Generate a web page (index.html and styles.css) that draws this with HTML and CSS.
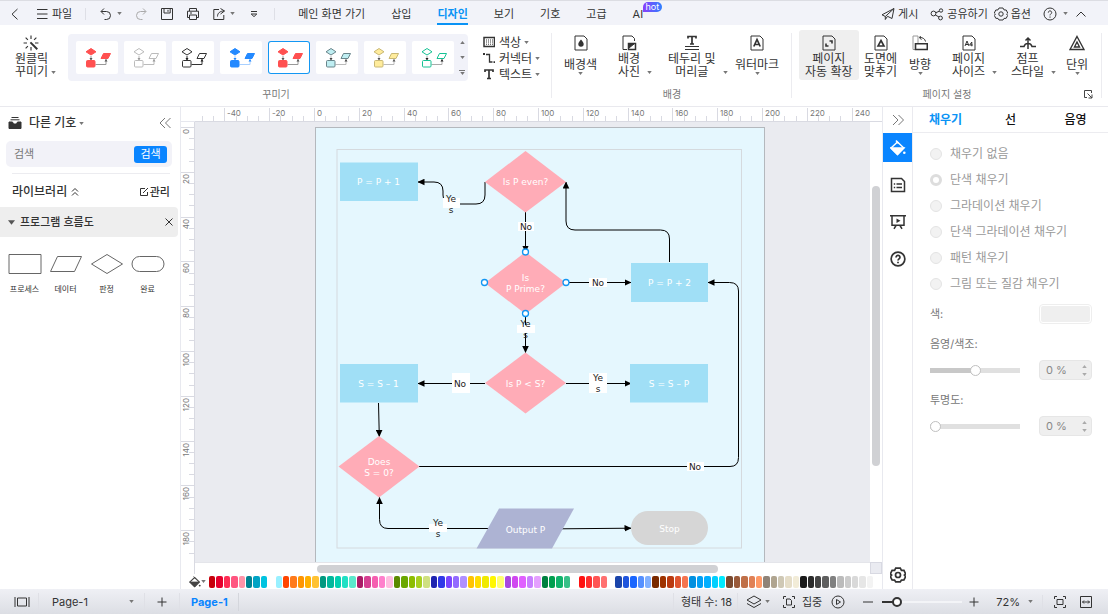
FILE: index.html
```html
<!DOCTYPE html>
<html lang="ko">
<head>
<meta charset="utf-8">
<title>Page-1</title>
<link rel="stylesheet" href="styles.css">
</head>
<body>
<svg class="defs" aria-hidden="true">
  <symbol id="i-caret" viewBox="0 0 6 4"><path d="M0 0h6L3 4z" fill="currentColor"/></symbol>
  <symbol id="i-back" viewBox="0 0 14 14"><path d="M9.500 2L4 7.200l5.500 5.200"/></symbol>
  <symbol id="i-menu" viewBox="0 0 14 14"><path d="M2 2.500h10.500M2 7h10.500M2 11.500h10.500"/></symbol>
  <symbol id="i-undo" viewBox="0 0 14 14"><path d="M5 1.500L2 4.500l3 3M2.200 4.500h5.300a4 4 0 0 1 0 8H5.500"/></symbol>
  <symbol id="i-redo" viewBox="0 0 14 14"><path d="M9 1.500l3 3-3 3M11.800 4.500H6.500a4 4 0 0 0 0 8h2"/></symbol>
  <symbol id="i-save" viewBox="0 0 14 14"><path d="M1.500 1.500h11v11h-11zM4 1.500v4.500h6.200V1.500M8 2.800v2"/></symbol>
  <symbol id="i-print" viewBox="0 0 14 14"><path d="M3.500 4V1.500h7V4M3.500 10.500h-2V4.200h11v6.300h-2M3.500 8h7v4.500h-7zM4 6h2"/></symbol>
  <symbol id="i-export" viewBox="0 0 14 14"><path d="M7 2.500H1.800v10h10V8M8.500 1.500l4 2.500-4 3M12.300 4C8 4 5.500 6 5.500 9.500"/></symbol>
  <symbol id="i-more" viewBox="0 0 14 14"><path d="M4 4.500h6M4.200 7L7 9.600 9.800 7z"/></symbol>
  <symbol id="i-plane" viewBox="0 0 14 14"><path d="M13 1.500L1 7.800l3.300 1.700L13 1.500l-2 10-4.500-2.200M4.300 9.500v3l2.200-3.200"/></symbol>
  <symbol id="i-share" viewBox="0 0 14 14"><circle cx="3.500" cy="6.500" r="2.400"/><circle cx="11" cy="3.500" r="1.700"/><circle cx="10.500" cy="11" r="1.900"/><path d="M5.800 5.700L9.400 4.200M5.400 8L9 10"/></symbol>
  <symbol id="i-gear" viewBox="0 0 14 14"><path d="M5 1h4l1 1.900 2.200.1 1.500 3L12.600 7l1.100 1.400-1.500 2.900-2.200.1L9 13H5l-1-1.600-2.200-.1L.3 8.400 1.400 7 .3 6l1.500-3L4 2.900z"/><circle cx="7" cy="7" r="2.200"/></symbol>
  <symbol id="i-help" viewBox="0 0 14 14"><circle cx="7" cy="7" r="6"/><path d="M5.300 5.600c0-2.400 3.500-2.200 3.400 0C8.700 6.800 7 7 7 8.400M7 9.500v1.200"/></symbol>
  <symbol id="i-up" viewBox="0 0 14 14"><path d="M2.500 9.500L7 5l4.500 4.500"/></symbol>
  <symbol id="i-wand" viewBox="0 0 14 14"><path d="M7 .5v3M2.300 2.300l2 2M11.700 2.300l-2 2M.5 7h3M10.500 7h3M2.300 11.700l2-2M7 10.500v3"/><path d="M6.500 6.500l6 6" stroke-width="1.700"/></symbol>
  <symbol id="i-grid" viewBox="0 0 12 12"><path d="M1 1.500h10.500v9H1z" stroke-width="1.500"/><path d="M3 4h7M3 6h7M3 8.200h7" stroke-dasharray="1 1"/></symbol>
  <symbol id="i-conn" viewBox="0 0 12 12"><path d="M3 2.500h3.500v7.500h3" stroke-width="1.300"/><path d="M0 1h2v2H0zM10.500 9.300h1.500v1.700h-1.500z" fill="currentColor" stroke="none"/></symbol>
  <symbol id="i-text" viewBox="0 0 12 12"><path d="M2 4V2h8v2M6 2v8.500M4 10.500h4" stroke-width="1.700"/></symbol>
  <symbol id="i-bg" viewBox="0 0 16 16"><path d="M2 1h9l3 3v11H2z"/><path d="M8 4.500c1.500 2 2.700 3 2.700 4.500a2.700 2.700 0 0 1-5.400 0C5.300 7.500 6.500 6.500 8 4.500z" fill="currentColor" stroke="none"/></symbol>
  <symbol id="i-photo" viewBox="0 0 16 16"><path d="M6 14.500H2V1h9l2.500 2.500V6"/><path d="M7.500 8.500h7v6h-7z" stroke-width="1.500"/><path d="M8 13V9l5 0z" fill="currentColor"/></symbol>
  <symbol id="i-header" viewBox="0 0 16 16"><path d="M4 3.500V1.500h8v2M8 1.500V9M6 9h4" stroke-width="1.700"/><path d="M1 11.500h14M1 14.500h14"/></symbol>
  <symbol id="i-mark" viewBox="0 0 16 16"><path d="M2 1h9l3 3v11H2z"/><path d="M4.800 11.500L8 4.500l3.200 7M6 9.500h4" stroke-width="1.700"/></symbol>
  <symbol id="i-expand" viewBox="0 0 16 16"><path d="M2 1h9l3 3v11H2z"/><path d="M8.500 6h2.500v2.500M7.500 11H5V8.500" stroke-width="1.600"/></symbol>
  <symbol id="i-fit" viewBox="0 0 16 16"><path d="M2 1h9l3 3v11H2z"/><path d="M8 5.500l3 5.500H5z" stroke-width="1.600"/></symbol>
  <symbol id="i-orient" viewBox="0 0 16 16"><path d="M4 14.500H1V1h5v7" stroke="#999"/><path d="M3.500 8.800h11.800v5.700H3.500z" stroke-width="1.600"/><path d="M8 2.500c3 0 5 1.500 5.500 4M8.500 1L7.500 3l2 1.500"/></symbol>
  <symbol id="i-size" viewBox="0 0 16 16"><path d="M2 1h9l3 3v11H2z"/><path d="M4 11l2-5 2 5M4.800 9.500h2.500M10.800 11.300V7L8.700 10h3"/></symbol>
  <symbol id="i-jump" viewBox="0 0 16 16"><path d="M0 11.500h4a4.200 4.200 0 0 1 8 0h4M8 14V3M5.500 5.500L8 3l2.500 2.500" stroke-width="1.500"/></symbol>
  <symbol id="i-unit" viewBox="0 0 16 16"><path d="M8 1.500l7 13H1zM8 7l2.500 5h-5z" stroke-width="1.400"/></symbol>
  <symbol id="i-launch" viewBox="0 0 10 10"><path d="M4 8.500H1.500v-7h7V4M4.500 4.500L9 9M9 5.500V9H5.500"/></symbol>
  <symbol id="i-style" viewBox="0 0 42 33"><path class="link" d="M15 15v4M19.500 23.500H30V18"/><path class="tip" d="M13.500 17h3L15 19.500zM28.500 20.500h3L30 18z"/><g class="fig"><path d="M15 7.500l5 3.300L15 14 10 10.800z"/><path d="M27.500 12.500H34.500l-2.500 5h-7z"/><rect x="10.500" y="19.500" width="8.500" height="6.500" rx="1"/></g></symbol>
  <symbol id="i-box" viewBox="0 0 14 14"><path d="M3.500 1.500h7M2.500 3.800h9" /><path d="M1 6h3.500l1 2h3l1-2H13v6.500H1z" fill="currentColor" stroke="currentColor"/></symbol>
  <symbol id="i-dleft" viewBox="0 0 14 14"><path d="M7 2L2 7l5 5M12.500 2l-5 5 5 5"/></symbol>
  <symbol id="i-dright" viewBox="0 0 14 14"><path d="M2 2l5 5-5 5M7.500 2l5 5-5 5"/></symbol>
  <symbol id="i-dup" viewBox="0 0 8 10"><path d="M1 4.500l3-3 3 3M1 8.500l3-3 3 3"/></symbol>
  <symbol id="i-edit" viewBox="0 0 10 10"><path d="M6 1.500H1.500v7h7V5M4 6l5-5"/></symbol>
  <symbol id="i-x" viewBox="0 0 10 10"><path d="M1.500 1.500l7 7M8.500 1.500l-7 7"/></symbol>
  <symbol id="i-fill" viewBox="0 0 16 16"><path d="M7.500 2l6.300 6-6.300 6.500L1 8z" fill="none" stroke-width="1.400"/><path d="M1 8h12.800l-6.300 6.500z" fill="currentColor"/><path d="M6 .5l2.500 3" /><circle cx="14.300" cy="12.800" r="1.300" fill="currentColor" stroke="none"/></symbol>
  <symbol id="i-doc" viewBox="0 0 16 16"><path d="M1.500 1.500h10l3 3v10h-13z"/><path d="M6.500 7H12M6.500 10.500H12M3.800 7h1.400M3.800 10.500h1.400"/></symbol>
  <symbol id="i-present" viewBox="0 0 16 16"><path d="M0 1.800h16M2 2v9.200h12V2M6 11.500L4 14.800M10 11.500l2 3.300"/><path d="M6.500 4.500l4 2.200-4 2.200z" fill="currentColor" stroke="none"/></symbol>
  <symbol id="i-panel" viewBox="0 0 16 12"><path d="M1 1v10M15 1v10M3.500 2h9v8h-9z"/></symbol>
  <symbol id="i-plus" viewBox="0 0 12 12"><path d="M6 1.500v9M1.500 6h9"/></symbol>
  <symbol id="i-minus" viewBox="0 0 12 12"><path d="M1 6h10"/></symbol>
  <symbol id="i-layers" viewBox="0 0 16 14"><path d="M8 1l7 4-7 4-7-4zM1 8.500l7 4 7-4"/></symbol>
  <symbol id="i-focus" viewBox="0 0 14 14"><path d="M1.500 4V1.500H4M10 1.500h2.500V4M12.500 10v2.500H10M4 12.500H1.500V10M4.500 4h3.500l1.500 1.500V10h-5z"/></symbol>
  <symbol id="i-play" viewBox="0 0 14 14"><circle cx="7" cy="7" r="6"/><path d="M5.500 4.500L9.500 7l-4 2.500z"/></symbol>
  <symbol id="i-fitpage" viewBox="0 0 14 14"><path d="M1.500 4V1.500H4M10 1.500h2.500V4M12.500 10v2.500H10M4 12.500H1.500V10M4 4.500h6v5H4z"/></symbol>
  <symbol id="i-fitwidth" viewBox="0 0 14 14"><path d="M1.500 1.500h11v11h-11zM3.500 7h7M5 5.500L3.500 7 5 8.500M9 5.500L10.500 7 9 8.500"/></symbol>
</svg>

<header class="topbar">
  <button class="tb-btn back" aria-label="뒤로"><svg class="ico"><use href="#i-back"/></svg></button>
  <button class="tb-btn file"><svg class="ico"><use href="#i-menu"/></svg>파일</button>
  <span class="vline"></span>
  <div class="quick">
    <button class="tb-btn" aria-label="실행 취소"><svg class="ico"><use href="#i-undo"/></svg><svg class="caret"><use href="#i-caret"/></svg></button>
    <button class="tb-btn faded" aria-label="다시 실행"><svg class="ico"><use href="#i-redo"/></svg></button>
    <button class="tb-btn" aria-label="저장"><svg class="ico"><use href="#i-save"/></svg></button>
    <button class="tb-btn" aria-label="인쇄"><svg class="ico"><use href="#i-print"/></svg></button>
    <button class="tb-btn" aria-label="내보내기"><svg class="ico"><use href="#i-export"/></svg><svg class="caret"><use href="#i-caret"/></svg></button>
    <button class="tb-btn" aria-label="더 보기"><svg class="ico"><use href="#i-more"/></svg></button>
  </div>
  <span class="vline"></span>
  <nav class="menu">
    <a href="#home">메인 화면 가기</a>
    <a href="#insert">삽입</a>
    <a href="#design" class="active">디자인</a>
    <a href="#view">보기</a>
    <a href="#symbol">기호</a>
    <a href="#advanced">고급</a>
    <a href="#ai" class="ai">AI<span class="hot">hot</span></a>
  </nav>
  <div class="account">
    <button class="tb-btn"><svg class="ico"><use href="#i-plane"/></svg>게시</button>
    <button class="tb-btn"><svg class="ico"><use href="#i-share"/></svg>공유하기</button>
    <button class="tb-btn near"><svg class="ico"><use href="#i-gear"/></svg>옵션</button>
    <button class="tb-btn" aria-label="도움말"><svg class="ico"><use href="#i-help"/></svg><svg class="caret"><use href="#i-caret"/></svg></button>
    <button class="tb-btn near" aria-label="리본 접기"><svg class="ico"><use href="#i-up"/></svg></button>
  </div>
</header>

<section class="ribbon">
  <div class="group beautify">
    <div class="group-body">
      <button class="tool one-click"><svg class="ico16"><use href="#i-wand"/></svg><span class="lbl">원클릭<br>꾸미기<svg class="caret"><use href="#i-caret"/></svg></span></button>
      <div class="gallery">
        <div class="styles" id="styles"></div>
        <div class="gallery-nav">
          <button aria-label="위로"><svg class="caret flip"><use href="#i-caret"/></svg></button>
          <button aria-label="아래로"><svg class="caret"><use href="#i-caret"/></svg></button>
          <button class="all" aria-label="모두 보기"><svg class="caret"><use href="#i-caret"/></svg></button>
        </div>
      </div>
      <div class="stack">
        <button><svg class="ico12"><use href="#i-grid"/></svg>색상<svg class="caret"><use href="#i-caret"/></svg></button>
        <button><svg class="ico12"><use href="#i-conn"/></svg>커넥터<svg class="caret"><use href="#i-caret"/></svg></button>
        <button><svg class="ico12"><use href="#i-text"/></svg>텍스트<svg class="caret"><use href="#i-caret"/></svg></button>
      </div>
    </div>
    <div class="group-name">꾸미기</div>
  </div>
  <div class="group background">
    <div class="group-body">
      <button class="tool single"><svg class="ico16"><use href="#i-bg"/></svg><span class="lbl">배경색</span><svg class="caret"><use href="#i-caret"/></svg></button>
      <button class="tool side"><svg class="ico16"><use href="#i-photo"/></svg><span class="lbl">배경<br>사진</span><svg class="caret"><use href="#i-caret"/></svg></button>
      <button class="tool side"><svg class="ico16"><use href="#i-header"/></svg><span class="lbl">테두리 및<br>머리글</span><svg class="caret"><use href="#i-caret"/></svg></button>
      <button class="tool single"><svg class="ico16"><use href="#i-mark"/></svg><span class="lbl">워터마크</span><svg class="caret"><use href="#i-caret"/></svg></button>
    </div>
    <div class="group-name">배경</div>
  </div>
  <div class="group page-setup">
    <div class="group-body">
      <button class="tool on"><svg class="ico16"><use href="#i-expand"/></svg><span class="lbl">페이지<br>자동 확장</span></button>
      <button class="tool"><svg class="ico16"><use href="#i-fit"/></svg><span class="lbl">도면에<br>맞추기</span></button>
      <button class="tool single"><svg class="ico16"><use href="#i-orient"/></svg><span class="lbl">방향</span><svg class="caret"><use href="#i-caret"/></svg></button>
      <button class="tool side"><svg class="ico16"><use href="#i-size"/></svg><span class="lbl">페이지<br>사이즈</span><svg class="caret"><use href="#i-caret"/></svg></button>
      <button class="tool side"><svg class="ico16"><use href="#i-jump"/></svg><span class="lbl">점프<br>스타일</span><svg class="caret"><use href="#i-caret"/></svg></button>
      <button class="tool single"><svg class="ico16"><use href="#i-unit"/></svg><span class="lbl">단위</span><svg class="caret"><use href="#i-caret"/></svg></button>
    </div>
    <div class="group-name">페이지 설정<button class="launch" aria-label="페이지 설정 열기"><svg class="ico10"><use href="#i-launch"/></svg></button></div>
  </div>
</section>

<main class="main">
  <aside class="library">
    <div class="lib-head">
      <svg class="ico"><use href="#i-box"/></svg>
      <button class="lib-title">다른 기호<svg class="caret"><use href="#i-caret"/></svg></button>
      <button class="plain push" aria-label="접기"><svg class="ico thin"><use href="#i-dleft"/></svg></button>
    </div>
    <form class="search">
      <input type="text" placeholder="검색" aria-label="검색">
      <button type="button">검색</button>
    </form>
    <div class="lib-row">
      <span>라이브러리</span><svg class="ico10"><use href="#i-dup"/></svg>
      <button class="plain push manage"><svg class="ico10"><use href="#i-edit"/></svg>관리</button>
    </div>
    <div class="lib-section">
      <svg class="tri"><use href="#i-caret"/></svg><span>프로그램 흐름도</span>
      <button class="plain push" aria-label="닫기"><svg class="ico10"><use href="#i-x"/></svg></button>
    </div>
    <div class="shapes">
      <figure><svg viewBox="0 0 34 20"><path d="M1 .5h32v19H1z"/></svg><figcaption>프로세스</figcaption></figure>
      <figure><svg viewBox="0 0 34 20"><path d="M8.500 2.500h24l-7 15h-24z"/></svg><figcaption>데이터</figcaption></figure>
      <figure><svg viewBox="0 0 34 20"><path d="M17 .5L32.500 10 17 19.500 1.500 10z"/></svg><figcaption>판정</figcaption></figure>
      <figure><svg viewBox="0 0 34 20"><rect x="1" y="2.500" width="32" height="15" rx="7.500"/></svg><figcaption>완료</figcaption></figure>
    </div>
  </aside>

  <section class="editor">
    <div class="corner"></div>
    <svg class="ruler-x" id="ruler-x"></svg>
    <svg class="ruler-y" id="ruler-y"></svg>
    <div class="workspace">
      <svg class="sheet" viewBox="315 127 450 634" width="450" height="634">
        <defs><marker id="arrow" viewBox="0 0 7 7" refX="6.500" refY="3.500" markerWidth="7" markerHeight="7" orient="auto" markerUnits="userSpaceOnUse"><path d="M0 .2L7 3.500 0 6.800z"/></marker></defs>
        <rect class="paper" x="315.500" y="127.500" width="449" height="633"/>
        <rect class="margin" x="337" y="149.500" width="404.500" height="398.500"/>
        <g class="wires">
          <path d="M485 182v13q0 9-9 9h-24q-9 0-9-9v-4q0-9-9-9H418"/>
          <path d="M525.500 212v40"/>
          <path d="M566 282.500h65"/>
          <path d="M669.500 262v-23q0-9-9-9H575q-9 0-9-9v-39"/>
          <path d="M525.500 314v38.500"/>
          <path d="M485 383.500h-67"/>
          <path d="M566 383.500h65"/>
          <path d="M378.500 403l.8 33.500"/>
          <path d="M419 466.500h311q8.500 0 8.500-9V291q0-8.500-9-8.500H708"/>
          <path d="M488 528.500H388q-8.500 0-8.500-9V497.500"/>
          <path d="M562 528.800l69-.6"/>
        </g>
        <g class="process"><rect x="340" y="162.500" width="78" height="38.500"/><rect x="631" y="263" width="77" height="39"/><rect x="340" y="364" width="78" height="38.500"/><rect x="630" y="364" width="78" height="38.500"/></g>
        <g class="decision"><path d="M525.500 151l40.500 31-40.500 30.500L485 182z"/><path d="M525.500 252l40.500 31-40.500 31L485 283z"/><path d="M525.500 352.500L566 383l-40.500 30.500L485 383z"/><path d="M379 436l40.500 30.500L379 497.500l-40.500-31z"/></g>
        <path class="data" d="M499 508.500h75L552 548.500h-75.500z"/>
        <rect class="end" x="631" y="511" width="77" height="34" rx="17"/>
        <g class="plate"><rect x="443" y="198" width="17" height="10"/><rect x="518" y="222" width="16" height="9"/><rect x="589" y="278" width="18" height="9"/><rect x="517" y="325" width="18" height="8"/><rect x="452" y="373" width="18" height="20"/><rect x="589" y="373" width="18" height="20"/><rect x="687" y="462" width="17" height="9"/><rect x="429" y="524" width="18" height="8"/></g>
        <g class="node-text">
          <text x="378.500" y="185">P = P + 1</text><text x="525.500" y="185">Is P even?</text>
          <text x="525.500" y="281">Is</text><text x="525.500" y="292">P Prime?</text>
          <text x="669.500" y="286">P = P + 2</text><text x="378.500" y="387">S = S – 1</text>
          <text x="525.500" y="387">Is P &lt; S?</text><text x="669" y="387">S = S – P</text>
          <text x="379" y="465">Does</text><text x="379" y="476">S = 0?</text>
          <text x="525.500" y="533">Output P</text><text x="669.500" y="532">Stop</text>
        </g>
        <g class="wire-text">
          <text x="451" y="202">Ye</text><text x="451" y="213">s</text>
          <text x="526" y="230">No</text><text x="598" y="286">No</text>
          <text x="525.500" y="327">Ye</text><text x="525.500" y="338">s</text>
          <text x="460" y="387">No</text>
          <text x="598" y="381">Ye</text><text x="598" y="392">s</text>
          <text x="695" y="470">No</text>
          <text x="438" y="526">Ye</text><text x="438" y="537">s</text>
        </g>
        <g class="handles"><circle cx="525.500" cy="252" r="3"/><circle cx="484.500" cy="282.500" r="3"/><circle cx="566" cy="282.500" r="3"/><circle cx="525.500" cy="313.500" r="3"/></g>
      </svg>
    </div>
    <div class="scroll-y"><span class="rest-top"></span><span class="thumb"></span><span class="rest-bottom"></span></div>
    <div class="scroll-x"><span class="thumb"></span></div>
    <div class="scroll-corner"></div>
    <div class="palette">
      <button class="plain fill-pick" aria-label="채우기 색"><svg class="ico12"><use href="#i-fill"/></svg><svg class="caret"><use href="#i-caret"/></svg></button>
      <div class="swatches" id="swatches"></div>
    </div>
  </section>

  <nav class="rail">
    <button class="rail-top" aria-label="패널 접기"><svg class="ico thin"><use href="#i-dright"/></svg></button>
    <button class="active" aria-label="채우기"><svg class="ico16"><use href="#i-fill"/></svg></button>
    <button aria-label="문서"><svg class="ico16"><use href="#i-doc"/></svg></button>
    <button aria-label="프레젠테이션"><svg class="ico16"><use href="#i-present"/></svg></button>
    <button aria-label="도움말"><svg class="ico16"><use href="#i-help"/></svg></button>
    <button class="bottom" aria-label="설정"><svg class="ico16"><use href="#i-gear"/></svg></button>
  </nav>

  <aside class="props">
    <div class="tabs"><button class="active">채우기</button><button>선</button><button>음영</button></div>
    <form class="fill-form">
      <div class="radios">
        <label><input type="radio" name="fill" disabled>채우기 없음</label>
        <label><input type="radio" name="fill" disabled checked>단색 채우기</label>
        <label><input type="radio" name="fill" disabled>그라데이션 채우기</label>
        <label><input type="radio" name="fill" disabled>단색 그라데이션 채우기</label>
        <label><input type="radio" name="fill" disabled>패턴 채우기</label>
        <label><input type="radio" name="fill" disabled>그림 또는 질감 채우기</label>
      </div>
      <div class="field color-field"><span>색:</span><button type="button" class="color" aria-label="색" disabled></button></div>
      <label class="caption" for="shade">음영/색조:</label>
      <div class="field"><input type="range" class="half" id="shade" min="0" max="100" value="50" disabled><span class="spin"><input type="text" value="0 %" aria-label="음영/색조 값" disabled><span class="arrows"><svg class="caret flip"><use href="#i-caret"/></svg><svg class="caret"><use href="#i-caret"/></svg></span></span></div>
      <label class="caption" for="alpha">투명도:</label>
      <div class="field"><input type="range" id="alpha" min="0" max="100" value="0" disabled><span class="spin"><input type="text" value="0 %" aria-label="투명도 값" disabled><span class="arrows"><svg class="caret flip"><use href="#i-caret"/></svg><svg class="caret"><use href="#i-caret"/></svg></span></span></div>
    </form>
  </aside>
</main>

<footer class="status">
  <button class="plain st-panel" aria-label="페이지 목록"><svg class="ico16"><use href="#i-panel"/></svg></button>
  <div class="page-pick"><select aria-label="페이지"><option>Page-1</option></select><svg class="caret"><use href="#i-caret"/></svg></div>
  <button class="plain st-add" aria-label="페이지 추가"><svg class="ico12"><use href="#i-plus"/></svg></button>
  <a class="page-tab" href="#page-1">Page-1</a>
  <div class="st-right">
    <span class="count">형태 수: 18</span>
    <button class="plain layers" aria-label="레이어"><svg class="ico16"><use href="#i-layers"/></svg><svg class="caret"><use href="#i-caret"/></svg></button>
    <button class="plain focus"><svg class="ico"><use href="#i-focus"/></svg>집중</button>
    <button class="plain play" aria-label="재생"><svg class="ico"><use href="#i-play"/></svg></button>
    <button class="plain" aria-label="축소"><svg class="ico12"><use href="#i-minus"/></svg></button>
    <input type="range" class="zoom" aria-label="확대/축소" min="0" max="100" value="14">
    <button class="plain" aria-label="확대"><svg class="ico12"><use href="#i-plus"/></svg></button>
    <button class="plain pct">72%<svg class="caret"><use href="#i-caret"/></svg></button>
    <button class="plain fitp" aria-label="페이지 맞춤"><svg class="ico"><use href="#i-fitpage"/></svg></button>
    <button class="plain" aria-label="너비 맞춤"><svg class="ico"><use href="#i-fitwidth"/></svg></button>
  </div>
</footer>
<script src="app.js"></script>
</body>
</html>
```

FILE: styles.css
```css
* { box-sizing: border-box; }
html, body { height: 100%; }
body {
  margin: 0;
  display: grid;
  grid-template-rows: 25px 82px minmax(0, 1fr) 25px;
  grid-template-columns: minmax(0, 1fr);
  overflow: hidden;
  background: #fff;
  color: #333;
  font: 11px/14px Inter, "Noto Sans CJK KR", sans-serif;
}
button, input, select { font: inherit; color: inherit; margin: 0; padding: 0; border: 0; background: none; }
button { display: inline-flex; align-items: center; white-space: nowrap; }
a { color: inherit; text-decoration: none; }
svg { flex: none; display: block; fill: none; stroke: currentColor; }
.defs { position: absolute; width: 0; height: 0; }
.ico { width: 14px; height: 14px; }
.ico16 { width: 16px; height: 16px; }
.ico12 { width: 12px; height: 12px; }
.ico10 { width: 10px; height: 10px; }
.thin { color: #777; }
.caret { width: 5px; height: 3px; stroke: none; color: #777; }
.flip { transform: rotate(180deg); }
.push { margin-left: auto; }

/* top bar */
.topbar { display: flex; align-items: center; padding: 1px 20px 0 8px; background: #f2f3f9; border-top: 1px solid #dcdde3; }
.tb-btn { gap: 3px; }
.faded { color: #aaa; }
.file { margin-left: 13px; }
.vline { width: 1px; height: 12px; margin: 0 13px; background: #dedfe6; }
.quick { display: flex; gap: 12px; }
.quick .caret { margin-left: 1px; }
.menu { display: flex; align-self: stretch; gap: 26px; margin-left: 10px; }
.menu a { position: relative; display: flex; align-items: center; }
.menu .active { color: #0a93f5; font-weight: 700; box-shadow: inset 0 -2px #0a93f5; }
.hot { position: absolute; left: 10px; top: 0; padding: 0 3px; border-radius: 5px 5px 5px 0; background: linear-gradient(90deg, #8a3ffc, #2f80ff); color: #fff; font-size: 9px; line-height: 10px; }
.account { display: flex; align-items: center; gap: 12px; margin-left: auto; }
.account .caret { margin-left: 3px; }
.account .near { margin-left: -6px; }

/* ribbon */
.ribbon { display: flex; padding-right: 6px; border-bottom: 1px solid #e9e9ee; font-size: 12px; line-height: 13px; }
.group { position: relative; display: flex; flex-direction: column; padding-top: 5px; }
.group::after { content: ""; position: absolute; right: 0; top: 8px; bottom: 8px; width: 1px; background: #ececf0; }
.beautify { flex: 0 0 552px; }
.background { flex: 0 0 240px; }
.page-setup { flex: 1; }
.group-body { height: 57px; }
.group-name { display: flex; justify-content: center; align-items: center; position: relative; color: #777; font-size: 10px; line-height: 14px; }
.launch { position: absolute; right: 9px; top: 2px; color: #444; }
.beautify .group-body { display: flex; align-items: flex-start; }
.tool { display: grid; justify-items: center; align-content: start; row-gap: 1px; height: 50px; padding-top: 5px; text-align: center; }
.lbl { white-space: nowrap; }
.background .group-body { display: grid; grid-template-columns: 54px 50px 67px auto; justify-items: start; padding-left: 12px; justify-content: start; }
.page-setup .group-body { display: grid; grid-template-columns: 65px 45px 43px 59px 55px auto; justify-items: start; padding-left: 7px; justify-content: start; }
.tool.on { padding: 5px 6px 0; border-radius: 3px; background: #efefef; }
.single .lbl { padding-top: 6px; }
.side { grid-template-columns: auto 5px; column-gap: 7px; }
.side .ico16 { grid-area: 1 / 1; }
.side .lbl { grid-area: 2 / 1; }
.side .caret { grid-area: 2 / 2; align-self: end; margin-bottom: 4px; }
.one-click { justify-items: start; width: 49px; margin-left: 15px; }
.one-click .ico16 { margin-left: 8px; }
.one-click .lbl { text-align: left; }
.one-click .caret { display: inline-block; margin-left: 3px; vertical-align: middle; }
.gallery { display: flex; gap: 2px; margin: 4px 0 0 4px; padding: 7px 0 7px 8px; border-radius: 4px; background: #f1f2f9; }
.styles { display: grid; grid-template-columns: repeat(8, 42px); column-gap: 6px; }
.style { width: 42px; height: 33px; border-radius: 2px; background: #fff; }
.style.on { box-shadow: inset 0 0 0 1px #1397f3; border-radius: 3px; }
.style svg { width: 42px; height: 33px; }
.fig { fill: var(--face); stroke: var(--line); }
.link { stroke: var(--wire); }
.tip { fill: var(--tip); stroke: none; }
.gallery-nav { display: flex; flex-direction: column; justify-content: space-between; width: 12px; margin: -2px 0; }
.gallery-nav button { justify-content: center; height: 6px; }
.gallery-nav .all { border-top: 1px solid #777; width: 6px; align-self: center; }
.stack { display: grid; grid-auto-rows: 16px; margin: 4px 0 0 15px; }
.stack button { gap: 4px; }
.stack .caret { margin-left: -1px; }

/* main area */
.main { display: grid; grid-template-columns: 181px minmax(0, 1fr) 30px 195px; min-height: 0; }
.library { border-right: 1px solid #e8e9ef; }
.plain { display: inline-flex; align-items: center; }
.lib-head { display: flex; align-items: center; gap: 7px; height: 30px; padding: 2px 8px 0; }
.lib-title { gap: 3px; font-size: 12px; font-weight: 500; }
.search { display: flex; align-items: center; margin: 4px 8px 0 6px; height: 26px; padding: 0 5px 0 8px; border-radius: 5px; background: #f2f2f8; }
.search input { flex: 1; min-width: 0; outline: 0; }
.search input::placeholder { color: #777; }
.search button { justify-content: center; width: 33px; height: 17px; border-radius: 3px; background: #0a85ff; color: #fff; }
.lib-row { display: flex; align-items: center; gap: 3px; height: 34px; margin: 6px 10px 0 12px; padding-top: 3px; border-top: 1px solid #ececf0; font-size: 12px; font-weight: 500; }
.manage { gap: 1px; font-size: 11px; }
.lib-section { display: flex; align-items: center; gap: 5px; height: 30px; margin-right: 2px; padding: 0 4px 0 8px; border-radius: 0 4px 4px 0; background: #eee; font-weight: 500; }
.tri { width: 7px; height: 5px; color: #555; stroke: none; }
.shapes { display: grid; grid-template-columns: repeat(4, 41px); margin: 17px 0 0 4px; }
.shapes figure { display: grid; justify-items: center; row-gap: 8px; margin: 0; }
.shapes svg { width: 34px; height: 20px; color: #666; }
.shapes figcaption { font-size: 8px; line-height: 14px; }

/* editor */
.editor { display: grid; grid-template-columns: 14px minmax(0, 1fr) 12px; grid-template-rows: 15px minmax(0, 1fr) 12px 15px; border-right: 1px solid #e8e9ef; min-height: 0; }
.corner { border-bottom: 1px solid #e6e7ee; }
.ruler-x { grid-column: 2 / 4; width: 100%; height: 15px; overflow: hidden; }
.ruler-y { grid-row: 2 / 4; width: 14px; height: 100%; overflow: hidden; }
.ruler-x path, .ruler-y path { stroke: #d9dae2; shape-rendering: crispEdges; }
.ruler-x text, .ruler-y text { fill: #777; stroke: none; font-size: 8px; }
.workspace { grid-column: 2; grid-row: 2; padding: 5px 0 0 120px; overflow: hidden; background: #eaebf0; }
.sheet text { stroke: none; font: 9px "DejaVu Sans", sans-serif; text-anchor: middle; }
.paper { fill: #e5f7fe; stroke: #b4b8bd; }
.margin { stroke: #d5dade; }
.wires path { stroke: #000; stroke-width: 1; marker-end: url(#arrow); }
#arrow path { fill: #000; stroke: none; }
.process { fill: #a0dff6; stroke: none; }
.decision { fill: #ffacb7; stroke: none; }
.data { fill: #adb3d3; stroke: none; }
.end { fill: #d6d6d6; stroke: none; }
.plate { fill: #fff; stroke: none; }
.node-text { fill: #fff; }
.wire-text { fill: #222; }
.handles { fill: #fff; stroke: #1296f3; stroke-width: 1.3; }
.scroll-y { grid-column: 3; grid-row: 2; display: flex; flex-direction: column; align-items: center; }
.rest-top { flex: 64; }
.rest-bottom { flex: 96; }
.scroll-y .thumb { flex: 280; width: 8px; border-radius: 4px; background: #d0d1d4; }
.scroll-x { grid-column: 2; grid-row: 3; display: flex; align-items: center; padding: 1px 152px 0 122px; border-top: 1px solid #e4e5ea; background: #fff; }
.scroll-x .thumb { flex: 1; height: 8px; border-radius: 4px; background: #d0d1d4; }
.scroll-corner { grid-column: 3; grid-row: 3; border: 1px solid #d8d9e2; background: #eaebf1; }
.palette { grid-column: 1 / 4; grid-row: 4; display: flex; align-items: center; gap: 3px; padding: 0 2px 0 8px; }
.fill-pick { gap: 0; color: #444; }
.swatches { flex: 1; display: flex; gap: 1px; }
.swatches button { flex: 1; height: 12px; border-radius: 2px; }

/* right rail */
.rail { display: flex; flex-direction: column; gap: 8px; border-right: 1px solid #eaeaef; color: #333; }
.rail button { justify-content: center; height: 29px; flex: none; }
.rail .rail-top { height: 26px; margin-bottom: -8px; }
.rail .active { background: #0a85ff; color: #fff; }
.rail .bottom { margin-top: auto; }
.rail .ico16 { stroke-width: 1.5; }

/* properties */
.tabs { display: flex; height: 26px; border-bottom: 1px solid #ececf0; }
.tabs button { flex: 1; justify-content: center; padding-top: 1px; color: #111; font-size: 12px; font-weight: 500; }
.tabs .active { color: #0a93f5; font-weight: 700; }
.fill-form { padding: 8px 16px 0 17px; color: #999; font-size: 12px; }
.radios { display: grid; grid-auto-rows: 26px; }
.radios label { display: flex; align-items: center; gap: 8px; }
.radios input { appearance: none; width: 12px; height: 12px; border: 1px solid #e4e4e4; border-radius: 50%; background: #f2f2f2; }
.radios input:checked { border: 3px solid #ddd; background: #fff; }
.field { display: flex; justify-content: space-between; align-items: center; height: 26px; margin-bottom: 4px; color: #777; font-size: 11px; }
.color-field { height: 34px; margin-bottom: 0; }
.color { width: 53px; height: 20px; border: 2px solid #fff; border-radius: 4px; outline: 1px solid #eee; outline-offset: -1px; background: #efefef; }
.caption { display: block; line-height: 26px; height: 26px; color: #777; font-size: 11px; }
.field input[type=range] { appearance: none; width: 90px; height: 13px; background: linear-gradient(#e0e0e0, #e0e0e0) center / 100% 5px no-repeat; }
.field .half[type=range] { background: linear-gradient(90deg, #c8c8c8 50%, #e0e0e0 50%) center / 100% 5px no-repeat; }
.field input[type=range]::-webkit-slider-thumb { appearance: none; width: 11px; height: 11px; border: 1px solid #c0c0c0; border-radius: 50%; background: #fff; }
.spin { display: flex; align-items: center; width: 53px; height: 20px; padding: 0 4px 0 6px; border: 1px solid #e6e6e6; border-radius: 4px; background: #efefef; }
.spin input { flex: 1; width: 0; min-width: 0; color: #888; }
.arrows { display: grid; row-gap: 5px; }
.arrows .caret { color: #aaa; }

/* status bar */
.status { display: flex; align-items: center; background: linear-gradient(#eff0f5, #dcdee4); }
.st-panel { padding: 0 8px 0 14px; border-right: 1px solid #dfe0e6; height: 18px; }
.page-pick { display: flex; align-items: center; width: 106px; padding: 0 10px 0 13px; border-right: 1px solid #dfe0e6; height: 18px; }
.page-pick select { flex: 1; appearance: none; outline: 0; }
.st-add { padding: 0 11px; border-right: 1px solid #dfe0e6; height: 18px; }
.page-tab { padding: 0 10px 0 11px; border-right: 1px solid #d4d6dc; line-height: 18px; color: #0a85ff; font-weight: 700; }
.st-right { display: flex; align-items: center; margin-left: auto; padding-right: 15px; }
.count { padding: 0 5px 0 7px; border: solid #dfe0e6; border-width: 0 1px; line-height: 18px; }
.layers { gap: 3px; padding: 0 12px 0 8px; }
.focus { gap: 6px; }
.play { margin: 0 17px 0 9px; }
.zoom { appearance: none; width: 80px; height: 12px; margin: 0 6px 0 8px; background: linear-gradient(90deg, #333 15%, #f3f4f7 15%) center / 100% 2px no-repeat; }
.zoom::-webkit-slider-thumb { appearance: none; width: 10px; height: 10px; border: 2px solid #333; border-radius: 50%; background: #fff; }
.pct { gap: 8px; margin-left: 16px; }
.fitp { margin: 0 12px 0 9px; padding-left: 10px; border-left: 1px solid #dfe0e6; }
```

FILE: app.js
```js
const SVG = "http://www.w3.org/2000/svg";

const styles = [
  ["#ff5050", "#ff5050", "#999", "#555"],
  ["#fff", "#bbb", "#bbb", "#999"],
  ["#fff", "#333", "#333", "#222"],
  ["#2389ff", "#2389ff", "#a9d0ff", "#2389ff"],
  ["#ff5050", "#ff5050", "#999", "#555"],
  ["#bfeef2", "#69858b", "#bbb", "#444"],
  ["#ffec9c", "#c9b875", "#bbb", "#555"],
  ["#fff", "#16c294", "#aaa", "#222"],
];
document.getElementById("styles").innerHTML = styles.map(([face, line, wire, tip], i) =>
  `<button class="style${i === 4 ? " on" : ""}" aria-label="스타일 ${i + 1}" style="--face:${face};--line:${line};--wire:${wire};--tip:${tip}"><svg><use href="#i-style"/></svg></button>`
).join("");

const colors = `c7000b e6002d ff2d55 ff5580 ff94a8 008291 00a3c4 00c3e0 ffffff 99f0ff
ff4500 ff7a1a ff9500 ffb000 ffc233 009980 00b89c 00d0b0 1fe0c4 5ce8cc
aa1a66 d63f92 f560b0 ff80cc ffbde0 5c8a00 6ba800 8dbd00 a8d020 cfe080
1f24b0 3038e8 7b45ff 936bff b090ff ffc400 ffdc00 f0ea00 fff700 ffff70
a848e0 d048f0 e060ff c97fff e5a0ff 008040 009f4f 10b36b 38c088 ffffff
ff1010 ff2d2d ff5555 ff7070 ffffff 1a44aa 1f55dd 1a66ff 5590ff 80b0ff
7a2a00 9f3300 ba3a10 e05530 f57550 0090e0 009ff5 00afff 00d0ff 00eaff
7a4a30 9a5a3a c07048 e08055 ff9966 8f8378 b0a590 cfc8b5 e5ddc8 f2ecd8
1a1a1a 2b2b2b 444444 5f5f5f 808080 bbbbbb cccccc d9d9d9 e6e6e6 f3f3f3 ffffff`.split(/\s+/);
document.getElementById("swatches").innerHTML = colors.map(c =>
  `<button style="background:#${c}" aria-label="#${c}"></button>`).join("");

// Rulers: millimetres at the current zoom
const SCALE = 2.24;
function ruler(id, origin, from, to, vertical) {
  const svg = document.getElementById(id);
  let d = "";
  for (let mm = from; mm <= to; mm += 5) {
    const p = Math.round(origin + mm * SCALE);
    const major = mm % 20 === 0;
    const start = major ? 0 : 8;
    d += vertical ? `M${start} ${p + 0.5}H14` : `M${p + 0.5} ${start + 1}V14`;
    if (major) {
      const t = document.createElementNS(SVG, "text");
      t.textContent = mm;
      if (vertical) {
        t.setAttribute("transform", `translate(8 ${p + 2}) rotate(-90)`);
        t.setAttribute("text-anchor", "end");
      } else {
        t.setAttribute("x", p + 3);
        t.setAttribute("y", 9);
      }
      svg.append(t);
    }
  }
  d += vertical ? "M13.500 0V2000" : "M0 14.500H4000";
  const path = document.createElementNS(SVG, "path");
  path.setAttribute("d", d);
  svg.prepend(path);
}
ruler("ruler-x", 119, -50, 240, false);
ruler("ruler-y", 5, 0, 190, true);
```
